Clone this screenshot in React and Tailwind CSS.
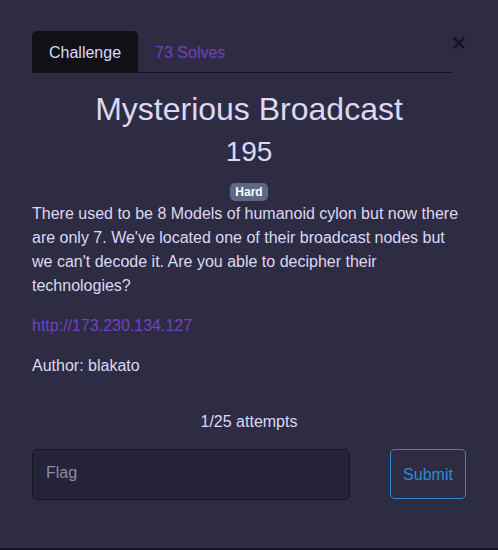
import React from 'react';

const App = () => {
  return (
    <div
      className="relative w-[498px] h-[550px] bg-[#2e2c43] border-b-2 border-[#15141d] overflow-hidden"
      style={{ fontFamily: '"Liberation Sans", Arial, sans-serif' }}
    >
      <div className="px-[32px] pt-[31px]">
        <div className="flex mr-[14px] border-b border-[#14131b]">
          <div className="px-[17px] pt-[10px] pb-[7px] h-[41px] rounded-t-[5px] bg-[#101116] text-[16px] leading-6 text-[#dcd8f5]">
            Challenge
          </div>
          <div className="px-[17px] pt-[10px] pb-[7px] text-[16px] leading-6 text-[#6f42c1]">73 Solves</div>
        </div>
        <button className="absolute left-[453px] top-[37px] w-[12px] h-[12px]">
          <svg viewBox="0 0 12 12" className="w-[12px] h-[12px]">
            <path d="M1.5 1.5 L10.5 10.5 M10.5 1.5 L1.5 10.5" stroke="#17161f" strokeWidth="2.6" strokeLinecap="square" />
          </svg>
        </button>

        <h2 className="mt-[17px] text-center text-[32px] leading-[38px] text-[#dcd8f5]">Mysterious Broadcast</h2>
        <h3 className="mt-[7px] text-center text-[28px] leading-[34px] text-[#dcd8f5]">195</h3>
        <div className="mt-[14px] flex justify-center">
          <span className="px-[5px] h-[18px] leading-[18px] rounded-[5px] bg-[#5a6986] text-white text-[12px] font-bold">
            Hard
          </span>
        </div>
        <p className="mt-[1px] text-[16px] leading-6 text-[#dcd8f5]">
          There used to be 8 Models of humanoid cylon but now there are only 7. We've located one of their broadcast nodes but we can't decode it. Are you able to decipher their technologies?
        </p>
        <p className="mt-[16px] text-[16px] leading-6 text-[#6f42c1]">http://173.230.134.127</p>
        <p className="mt-[16px] text-[16px] leading-6 text-[#dcd8f5]">Author: blakato</p>
        <p className="mt-[32px] text-center text-[16px] leading-6 text-[#dcd8f5]">1/25 attempts</p>
        <div className="mt-[15px] flex items-start justify-between">
          <div className="w-[318px] h-[51px] rounded-[5px] border border-[#17161f] bg-[#25233a] px-[13px] pt-[13px] text-[16px] leading-5 text-[#8f8aa8]">
            Flag
          </div>
          <button className="w-[76px] h-[50px] pt-[2px] rounded-[5px] border border-[#2a8ad4] text-[16px] text-[#2a8ad4]">
            Submit
          </button>
        </div>
      </div>
    </div>
  );
};

export default App;
